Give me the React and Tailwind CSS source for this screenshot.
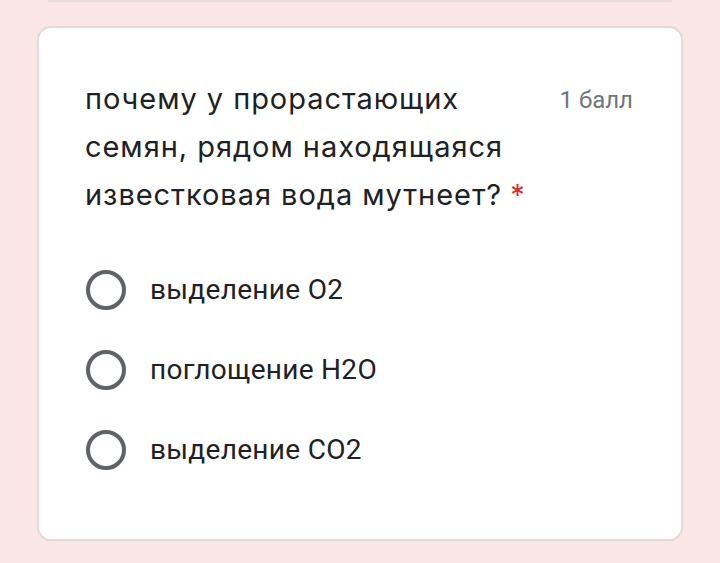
const options = ["выделение O2", "поглощение H2O", "выделение CO2"];

const Radio = () => (
  <span className="w-10 h-10 rounded-full border-[4px] border-[#5f6368] shrink-0" />
);

const App = () => {
  return (
    <div className="w-[720px] h-[563px] bg-[#fae6e5] overflow-hidden relative">
      {/* bottom of previous card */}
      <div className="mx-12 h-[2px] bg-[#e6dcdc]" />
      <div className="mx-[37px] mt-6 h-[515px] bg-white rounded-[14px] border-2 border-[#e0dada] pl-[46px] pr-12 pt-[47px]">
        <div className="flex items-start justify-between">
          <p
            className="text-[29px] leading-[48px] text-[#202124] tracking-[0.95px] w-[460px]"
            style={{ fontFamily: 'Inter, "Noto Sans", sans-serif' }}
          >
            почему у прорастающих
            <br />
            семян, рядом находящаяся
            <br />
            известковая вода мутнеет?
            <span className="text-[#d93025] ml-2">*</span>
          </p>
          <span
            className="text-[24px] leading-[48px] text-[#70757a] mt-[1px]"
            style={{ fontFamily: "Roboto, sans-serif" }}
          >
            1 балл
          </span>
        </div>
        <div className="mt-[51px] flex flex-col gap-10 pl-[1px]">
          {options.map((o) => (
            <div key={o} className="flex items-center gap-[24px] h-10">
              <Radio />
              <span
                className="text-[28px] text-[#202124] tracking-[0.3px]"
                style={{ fontFamily: "Roboto, sans-serif" }}
              >
                {o}
              </span>
            </div>
          ))}
        </div>
      </div>
    </div>
  );
};

export default App;
